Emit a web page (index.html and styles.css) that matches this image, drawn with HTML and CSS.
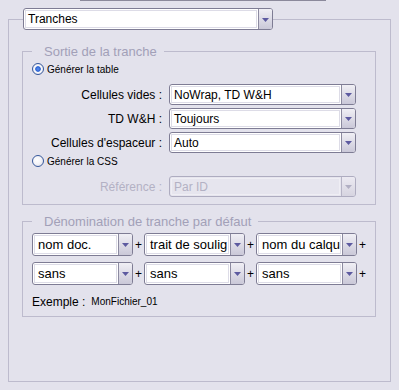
FILE: index.html
```html
<!DOCTYPE html>
<html lang="fr">
<head>
<meta charset="utf-8">
<title>Tranches</title>
<link rel="stylesheet" href="styles.css">
</head>
<body>
<div class="topline"></div>
<fieldset class="panel">
  <legend class="panel-legend">
    <div class="select select-main">
      <span class="field">Tranches</span>
      <span class="btn"><svg width="7" height="4" viewBox="0 0 7 4"><path d="M0 0H7L3.5 4Z"/></svg></span>
    </div>
  </legend>

  <fieldset class="group group-out">
    <legend class="group-title">Sortie de la tranche</legend>
    <div class="radio-row first"><span class="radio checked"></span><span>Générer la table</span></div>
    <div class="form-grid">
      <span class="lbl">Cellules vides :</span>
      <div class="select"><span class="field">NoWrap, TD W&amp;H</span><span class="btn"><svg width="7" height="4" viewBox="0 0 7 4"><path d="M0 0H7L3.5 4Z"/></svg></span></div>
      <span class="lbl">TD W&amp;H :</span>
      <div class="select"><span class="field">Toujours</span><span class="btn"><svg width="7" height="4" viewBox="0 0 7 4"><path d="M0 0H7L3.5 4Z"/></svg></span></div>
      <span class="lbl">Cellules d'espaceur :</span>
      <div class="select"><span class="field">Auto</span><span class="btn"><svg width="7" height="4" viewBox="0 0 7 4"><path d="M0 0H7L3.5 4Z"/></svg></span></div>
    </div>
    <div class="radio-row second"><span class="radio"></span><span>Générer la CSS</span></div>
    <div class="form-grid ref">
      <span class="lbl disabled">Référence :</span>
      <div class="select is-disabled"><span class="field">Par ID</span><span class="btn"><svg width="7" height="4" viewBox="0 0 7 4"><path d="M0 0H7L3.5 4Z"/></svg></span></div>
    </div>
  </fieldset>

  <fieldset class="group group-name">
    <legend class="group-title">Dénomination de tranche par défaut</legend>
    <div class="name-grid">
      <div class="select big"><span class="field">nom doc.</span><span class="btn"><svg width="7" height="4" viewBox="0 0 7 4"><path d="M0 0H7L3.5 4Z"/></svg></span></div>
      <span class="plus">+</span>
      <div class="select big"><span class="field">trait de soulig</span><span class="btn"><svg width="7" height="4" viewBox="0 0 7 4"><path d="M0 0H7L3.5 4Z"/></svg></span></div>
      <span class="plus">+</span>
      <div class="select big"><span class="field">nom du calqu</span><span class="btn"><svg width="7" height="4" viewBox="0 0 7 4"><path d="M0 0H7L3.5 4Z"/></svg></span></div>
      <span class="plus">+</span>
      <div class="select big"><span class="field">sans</span><span class="btn"><svg width="7" height="4" viewBox="0 0 7 4"><path d="M0 0H7L3.5 4Z"/></svg></span></div>
      <span class="plus">+</span>
      <div class="select big"><span class="field">sans</span><span class="btn"><svg width="7" height="4" viewBox="0 0 7 4"><path d="M0 0H7L3.5 4Z"/></svg></span></div>
      <span class="plus">+</span>
      <div class="select big"><span class="field">sans</span><span class="btn"><svg width="7" height="4" viewBox="0 0 7 4"><path d="M0 0H7L3.5 4Z"/></svg></span></div>
      <span class="plus">+</span>
    </div>
    <div class="example"><span class="ex-label">Exemple :</span><span class="ex-val">MonFichier_01</span></div>
  </fieldset>
</fieldset>
</body>
</html>
```
FILE: styles.css
```css
* { box-sizing: border-box; }
html, body { margin: 0; padding: 0; }
body {
  width: 399px;
  height: 390px;
  overflow: hidden;
  background: #e3e2ec;
  font-family: "Liberation Sans", Arial, sans-serif;
  color: #000;
}
.topline {
  margin-left: 80px;
  width: 246px;
  height: 1px;
  background: #8b899b;
}
fieldset { min-inline-size: 0; }
legend { padding: 0; }

.panel {
  margin: 7px 0 0 8px;
  width: 383px;
  height: 374px;
  padding: 0 14px 0 13px;
  border: 1px solid #bdbbcd;
}
.panel-legend { margin-left: 1px; padding: 0; }

/* dropdowns */
.select {
  display: flex;
  height: 21px;
  border: 1px solid #7e7c94;
  border-radius: 3px;
  background: #fff;
  overflow: hidden;
}
.select .field {
  flex: 1;
  display: flex;
  align-items: center;
  margin: 1px;
  border: 1px solid #dddce7;
  padding-left: 2px;
  font-size: 12px;
  white-space: nowrap;
  overflow: hidden;
}
.select .btn {
  width: 14px;
  flex: none;
  display: flex;
  align-items: center;
  justify-content: center;
  border-left: 1px solid #8c8aa0;
  background: linear-gradient(#f0eff5, #cac8d8);
}
.select .btn svg { display: block; fill: #5d5aa0; margin-top: 1px; }
.select-main { width: 250px; height: 22px; }

.select.is-disabled { border-color: #aeacc0; background: #e6e5ee; }
.select.is-disabled .field { border-color: #efeef4; color: #b3b1c4; }
.select.is-disabled .btn { border-left-color: #b6b4c6; background: linear-gradient(#eceaf2, #d6d4e0); }
.select.is-disabled .btn svg { fill: #b1afc3; }

/* groups */
.group {
  width: 354px;
  margin: 0;
  padding: 0 9px 7px 9px;
  border: 1px solid #bdbbcd;
}
.group-out { margin-top: 14px; }
.group-name { margin-top: 9px; }
.group-title {
  padding: 0 7px 0 12px;
  font-size: 13px;
  line-height: 15px;
  color: #a2a0b8;
}

.radio-row {
  display: flex;
  align-items: center;
  height: 14px;
  font-size: 10px;
}
.radio-row.first { margin-top: 3px; }
.radio-row.second { margin-top: 1px; }
.radio {
  width: 12px;
  height: 12px;
  border-radius: 50%;
  border: 1px solid #36589b;
  background: radial-gradient(circle at 40% 40%, #ffffff 0, #f4f4f8 45%, #d6d5e2 100%);
  margin-right: 3px;
  flex: none;
}
.radio.checked {
  background: radial-gradient(circle at 50% 50%, #5a8ff0 0, #2d63d2 2.4px, #ffffff 3.2px, #f4f4f8 55%, #d6d5e2 100%);
}

.form-grid {
  display: grid;
  grid-template-columns: 131px 187px;
  grid-auto-rows: 21px;
  column-gap: 6px;
  row-gap: 3px;
  margin-top: 8px;
}
.lbl {
  display: flex;
  align-items: center;
  justify-content: flex-end;
  padding-right: 1px;
  font-size: 12px;
  white-space: nowrap;
}
.lbl.disabled { color: #b3b1c4; }

.name-grid {
  display: grid;
  grid-template-columns: 101px 11px 101px 11px 101px 11px;
  grid-auto-rows: 23px;
  row-gap: 6px;
  margin-top: 4px;
}
.select.big { height: 23px; }
.select.big .field { font-size: 13px; padding-left: 3px; }
.plus {
  display: flex;
  align-items: center;
  justify-content: center;
  font-size: 12px;
}

.example {
  display: flex;
  align-items: center;
  margin-top: 9px;
  height: 15px;
}
.ex-label { font-size: 12px; }
.ex-val { font-size: 10px; margin-left: 6px; }
```
